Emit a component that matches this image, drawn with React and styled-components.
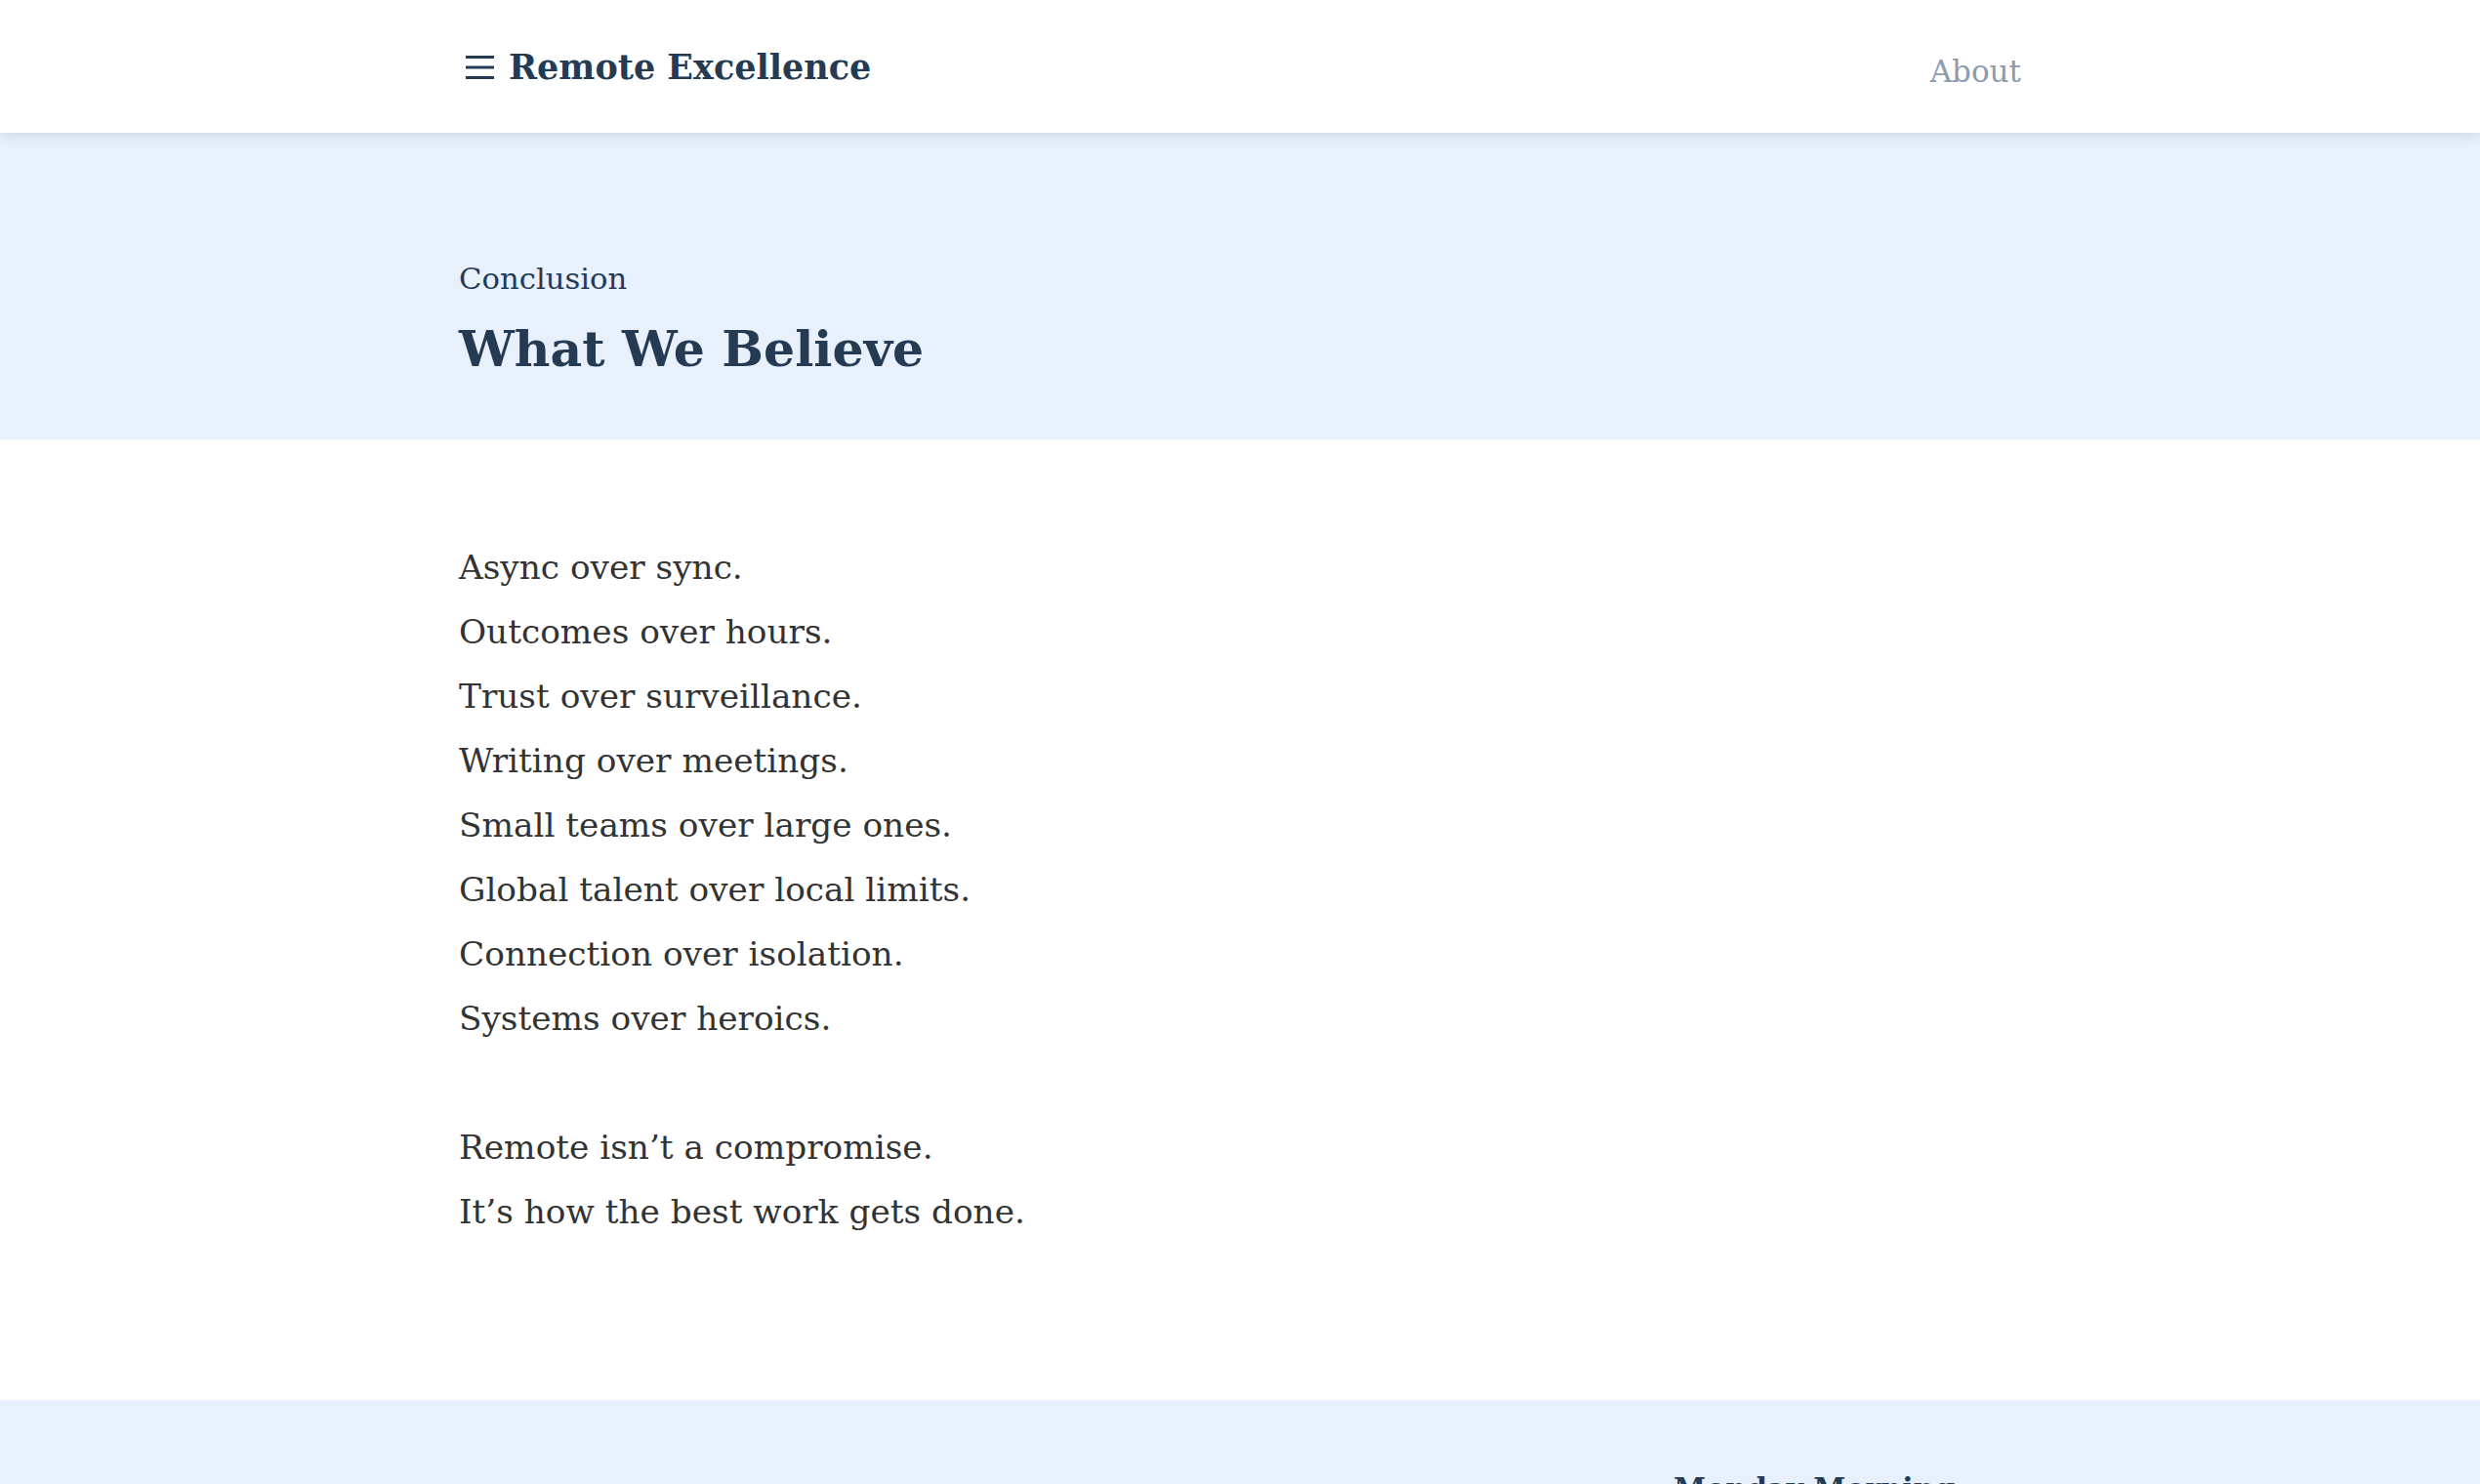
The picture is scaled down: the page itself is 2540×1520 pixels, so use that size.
import styled, { createGlobalStyle } from "styled-components";

// Global page styles

const GlobalStyle = createGlobalStyle`
  html, body {
    margin: 0;
    padding: 0;
    background: #ffffff;
  }
  body {
    font-family: "DejaVu Serif", "Liberation Serif", serif;
    color: #333333;
  }
`;

// Styled Components

const Header = styled.header`
  position: relative;
  z-index: 2;
  background: #ffffff;
  box-shadow: 0 2px 12px rgba(36, 59, 83, 0.14);
`;

const Container = styled.div`
  width: 1600px;
  margin: 0 auto;
`;

const HeaderBar = styled(Container)`
  height: 136px;
  display: flex;
  align-items: center;
  justify-content: space-between;
`;

const Logo = styled.a`
  display: flex;
  align-items: center;
  gap: 15px;
  color: #243b53;
  font-size: 35px;
  font-weight: 700;
  text-decoration: none;
`;

const MenuIcon = styled.svg`
  margin-left: 7px;
  margin-top: 2px;
`;

const NavLink = styled.a`
  margin-top: 9px;
  color: #8b9bb0;
  font-size: 31px;
  text-decoration: none;
`;

const Hero = styled.section`
  background: #e7f0fb;
  padding: 130px 0 61px;
`;

const Eyebrow = styled.p`
  margin: 0 0 21px;
  font-size: 30.7px;
  line-height: 40px;
  color: #243b53;
`;

const Title = styled.h1`
  margin: 0;
  font-size: 50.5px;
  line-height: 62px;
  font-weight: 700;
  color: #243b53;
`;

const Main = styled.main`
  padding: 98px 0 160px;
`;

const Stanza = styled.p`
  margin: 0 0 ${(p) => (p.$last ? 0 : 66)}px;
  font-size: 34.3px;
  line-height: 66px;
  color: #333333;
`;

const Line = styled.span`
  display: block;
`;

const Footer = styled.footer`
  background: #e7f0fb;
  padding: 73px 0 80px;
`;

const FooterGrid = styled(Container)`
  display: grid;
  grid-template-columns: 1fr 356px;
`;

const FooterHeading = styled.h3`
  grid-column: 2;
  margin: 0 0 16px;
  font-size: 30px;
  font-weight: 700;
  color: #243b53;
`;

const FooterLink = styled.a`
  grid-column: 2;
  display: block;
  font-size: 26px;
  line-height: 48px;
  color: #52667a;
  text-decoration: none;
`;

const beliefs = [
  "Async over sync.",
  "Outcomes over hours.",
  "Trust over surveillance.",
  "Writing over meetings.",
  "Small teams over large ones.",
  "Global talent over local limits.",
  "Connection over isolation.",
  "Systems over heroics.",
];

const closing = [
  "Remote isn\u2019t a compromise.",
  "It\u2019s how the best work gets done.",
];

export default function App() {
  return (
    <>
      <GlobalStyle />
      <Header>
        <HeaderBar>
          <Logo href="#">
            <MenuIcon width="29" height="24" viewBox="0 0 29 24">
              <rect x="0" y="0" width="29" height="3" fill="#243b53" />
              <rect x="0" y="10.5" width="29" height="3" fill="#243b53" />
              <rect x="0" y="21" width="29" height="3" fill="#243b53" />
            </MenuIcon>
            Remote Excellence
          </Logo>
          <NavLink href="#">About</NavLink>
        </HeaderBar>
      </Header>

      <Hero>
        <Container>
          <Eyebrow>Conclusion</Eyebrow>
          <Title>What We Believe</Title>
        </Container>
      </Hero>

      <Main>
        <Container>
          <Stanza>
            {beliefs.map((line) => (
              <Line key={line}>{line}</Line>
            ))}
          </Stanza>
          <Stanza $last>
            {closing.map((line) => (
              <Line key={line}>{line}</Line>
            ))}
          </Stanza>
        </Container>
      </Main>

      <Footer>
        <FooterGrid>
          <FooterHeading>Monday Morning</FooterHeading>
          <FooterLink href="#">Start here</FooterLink>
          <FooterLink href="#">Checklists</FooterLink>
        </FooterGrid>
      </Footer>
    </>
  );
}
